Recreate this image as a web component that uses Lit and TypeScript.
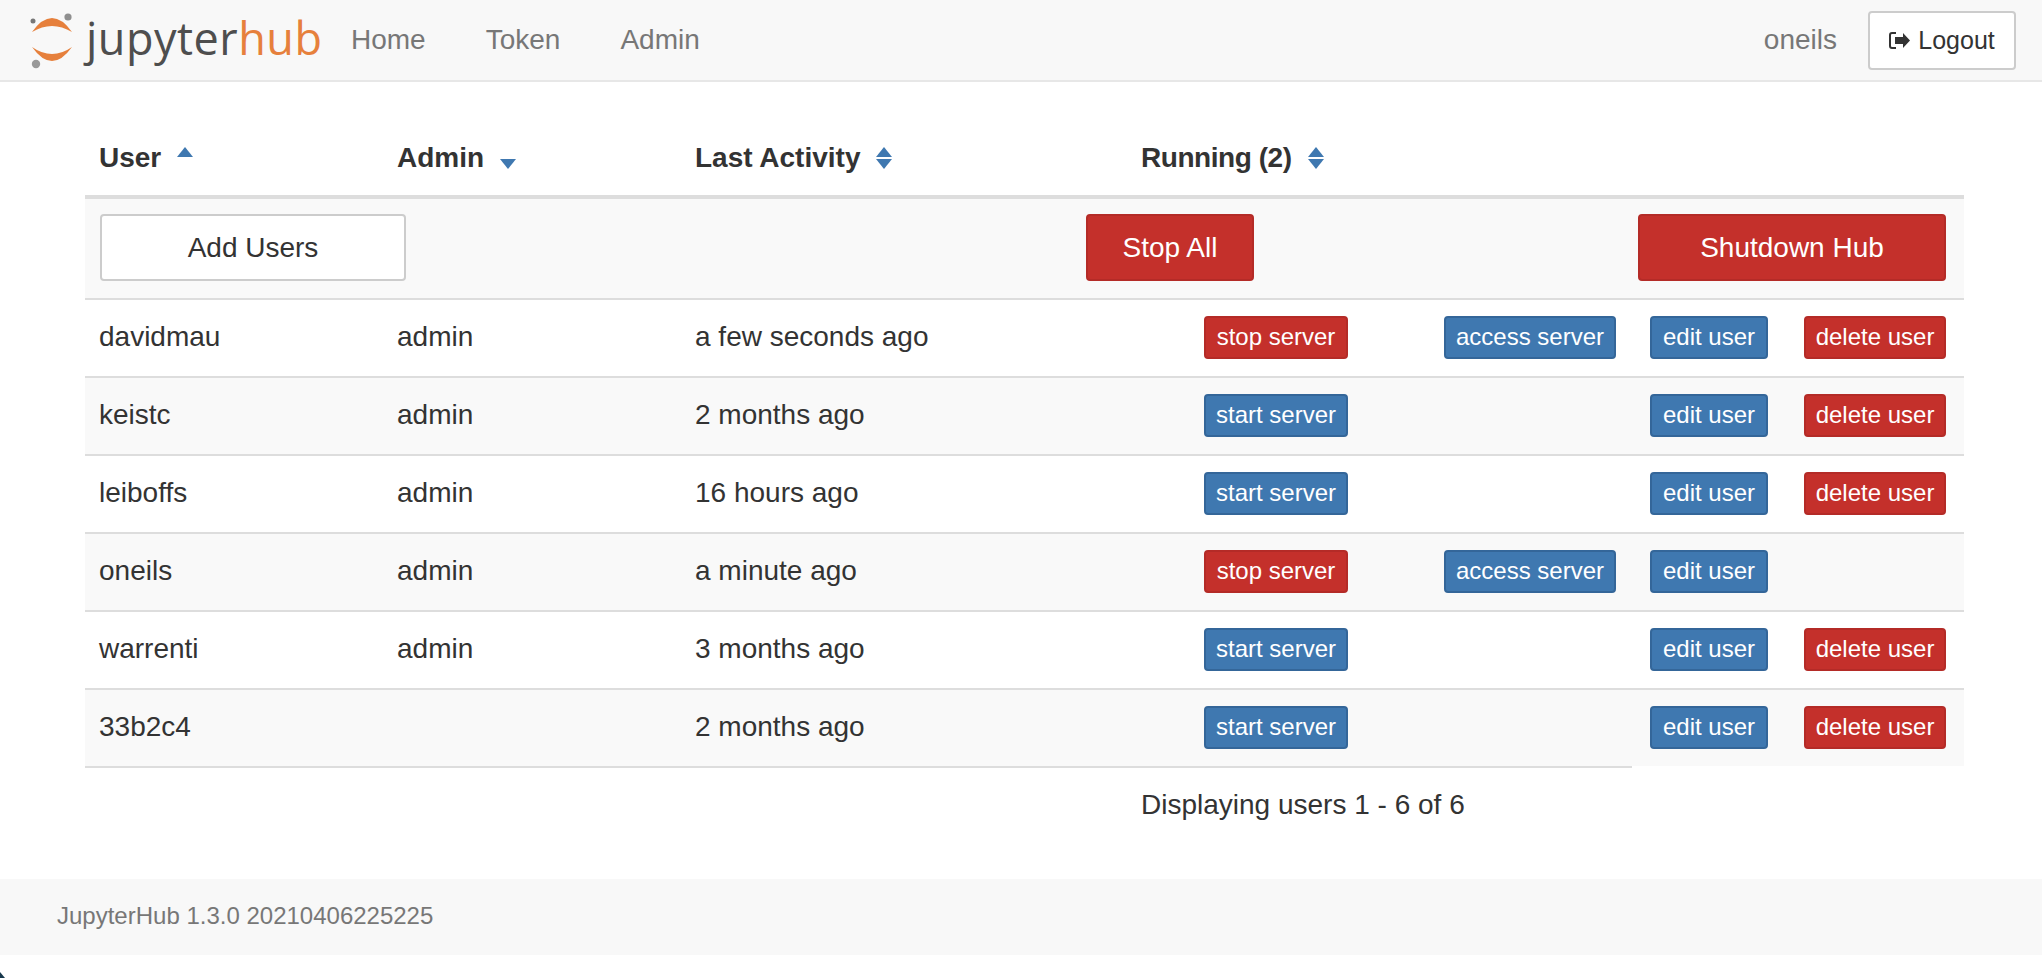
import { LitElement, html, css, svg } from "lit";
import { customElement } from "lit/decorators.js";

type U = { n: string; a: string; t: string; running: boolean; del: boolean; last?: boolean };
const users: U[] = [
  { n: "davidmau", a: "admin", t: "a few seconds ago", running: true, del: true },
  { n: "keistc", a: "admin", t: "2 months ago", running: false, del: true },
  { n: "leiboffs", a: "admin", t: "16 hours ago", running: false, del: true },
  { n: "oneils", a: "admin", t: "a minute ago", running: true, del: false },
  { n: "warrenti", a: "admin", t: "3 months ago", running: false, del: true },
  { n: "33b2c4", a: "", t: "2 months ago", running: false, del: true, last: true },
];

const caret = (up: boolean, down: boolean) => html`<svg class="caret" width="16" height="22" viewBox="0 0 16 22">
  ${up ? svg`<path d="M8 0 L16 10 H0 Z" fill="#3f78b0"/>` : ""}
  ${down ? svg`<path d="M0 12 H16 L8 22 Z" fill="#3f78b0"/>` : ""}
</svg>`;

@customElement("app-root")
export class AppRoot extends LitElement {
  static styles = css`
    :host { display: block; position: relative; font-family: "Liberation Sans", Arial, sans-serif; color: #333; font-size: 28px; background: #fff; height: 978px; overflow: hidden; }
    .nav { height: 80px; background: #f8f8f8; border-bottom: 2px solid #e7e7e7; display: flex; align-items: center; padding-right: 26px; }
    .logo { display: flex; align-items: center; width: 351px; flex: none; }
    .logo svg { margin-left: 30px; flex: none; }
    .wordmark { font-family: "Open Sans", sans-serif; font-size: 45px; font-weight: 400; margin-left: 10px; margin-top: -6px; color: #4e4e4e; white-space: nowrap; letter-spacing: 0.5px; }
    .wordmark b { font-weight: 400; color: #e6803c; }
    .links { display: flex; gap: 60px; color: #777; flex: 1; }
    .user { color: #777; margin-right: 31px; }
    .logout { width: 148px; height: 59px; box-sizing: border-box; background: #fff; border: 2px solid #ccc; border-radius: 4px; display: flex; align-items: center; justify-content: center; gap: 8px; font-size: 25px; color: #333; }
    .main { padding: 0 78px 0 85px; }
    .row { display: grid; grid-template-columns: 298px 298px 446px 298px 207px 154px 178px; height: 78px; align-items: center; box-sizing: border-box; padding-bottom: 2px; }
    .head { height: 117px; border-bottom: 4px solid #ddd; font-weight: 700; align-items: stretch; padding-bottom: 0; }
    .head > div { padding: 53px 0 0 14px; display: flex; align-items: flex-start; gap: 16px; line-height: 46px; white-space: nowrap; }
    .head > .tight { letter-spacing: -0.45px; }
    .caret { margin-top: 12px; flex: none; }
    .cell { padding-left: 14px; }
    .center { display: flex; justify-content: center; align-items: center; padding-left: 0; }
    .grey { background: #f9f9f9; }
    .line { border-bottom: 2px solid #ddd; }
    .tools { height: 101px; box-sizing: border-box; display: flex; align-items: center; padding: 0 18px 2px 15px; background: #f9f9f9; border-bottom: 2px solid #ddd; }
    .btn { box-sizing: border-box; border-radius: 4px; display: flex; align-items: center; justify-content: center; white-space: nowrap; border: 2px solid transparent; }
    .big { height: 67px; font-size: 28px; }
    .add { width: 306px; background: #fff; border-color: #ccc; color: #333; }
    .stopall { width: 168px; margin-left: 680px; }
    .shutdown { width: 308px; margin-left: auto; }
    .xs { height: 43px; font-size: 24px; }
    .red { background: #c4302b; border-color: #b42b27; color: #fff; }
    .blue { background: #3f78b0; border-color: #346699; color: #fff; }
    .w-server { width: 144px; }
    .w-access { width: 172px; margin-left: 3px; }
    .w-edit { width: 118px; }
    .w-del { width: 142px; }
    .lastrow { padding-bottom: 0; }
    .stack { grid-column: 1 / span 5; display: grid; grid-template-columns: 298px 298px 446px 298px 207px; align-items: center; height: 78px; border-bottom: 2px solid #ddd; padding-bottom: 2px; box-sizing: border-box; }
    .nb { height: 76px; align-self: start; padding-bottom: 2px; box-sizing: border-box; }
    .display { padding: 22px 0 0 1056px; line-height: 30px; height: 111px; box-sizing: border-box; }
    .foot { height: 76px; box-sizing: border-box; padding: 0 0 2px 57px; background: #f8f8f8; display: flex; align-items: center; color: #777; font-size: 24px; }
    .corner { position: absolute; left: 0; bottom: 0; width: 5px; height: 6px; background: #17384c; clip-path: polygon(0 0, 100% 100%, 0 100%); }
  `;

  private cells(u: U) {
    return html`
      <div class="cell">${u.n}</div>
      <div class="cell">${u.a}</div>
      <div class="cell">${u.t}</div>
      <div class="center"><div class="btn xs w-server ${u.running ? "red" : "blue"}">${u.running ? "stop server" : "start server"}</div></div>
      <div class="center">${u.running ? html`<div class="btn xs w-access blue">access server</div>` : ""}</div>`;
  }

  render() {
    const edit = html`<div class="btn xs w-edit blue">edit user</div>`;
    const del = html`<div class="btn xs w-del red">delete user</div>`;
    return html`
      <div class="nav">
        <div class="logo">
          <svg width="46" height="58" viewBox="30 10 46 58">
            <path d="M32 31 Q52 3 72 31 Q52 19 32 31 Z" fill="#e6803c"/>
            <path d="M32 46 Q52 74 72 46 Q52 60 32 46 Z" fill="#e6803c"/>
            <circle cx="68" cy="16" r="3.6" fill="#8f8f8f"/>
            <circle cx="33" cy="20" r="2.5" fill="#777"/>
            <circle cx="36" cy="63" r="4.2" fill="#999"/>
          </svg>
          <span class="wordmark">jupyter<b>hub</b></span>
        </div>
        <div class="links"><span>Home</span><span>Token</span><span>Admin</span></div>
        <span class="user">oneils</span>
        <div class="logout">
          <svg width="21" height="17" viewBox="0 0 21 17"><path d="M7 1 H3 Q1 1 1 3 V14 Q1 16 3 16 H7" fill="none" stroke="#333" stroke-width="2"/><path d="M6 5 H14 V1 L21 8.5 L14 16 V12 H6 Z" fill="#333"/></svg>
          <span>Logout</span>
        </div>
      </div>
      <div class="main">
        <div class="row head">
          <div>User ${caret(true, false)}</div>
          <div>Admin ${caret(false, true)}</div>
          <div>Last Activity ${caret(true, true)}</div>
          <div class="tight">Running (2) ${caret(true, true)}</div>
        </div>
        <div class="tools">
          <div class="btn big add">Add Users</div>
          <div class="btn big red stopall">Stop All</div>
          <div class="btn big red shutdown">Shutdown Hub</div>
        </div>
        ${users.map((u, i) => u.last
          ? html`<div class="row lastrow">
              <div class="stack grey">${this.cells(u)}</div>
              <div class="center grey nb">${edit}</div>
              <div class="center grey nb">${del}</div>
            </div>`
          : html`<div class="row line ${i % 2 ? "grey" : ""}">${this.cells(u)}<div class="center">${edit}</div><div class="center">${u.del ? del : ""}</div></div>`)}
        <div class="display">Displaying users 1 - 6 of 6</div>
      </div>
      <div class="foot">JupyterHub 1.3.0 20210406225225</div>
      <div class="corner"></div>
    `;
  }
}
